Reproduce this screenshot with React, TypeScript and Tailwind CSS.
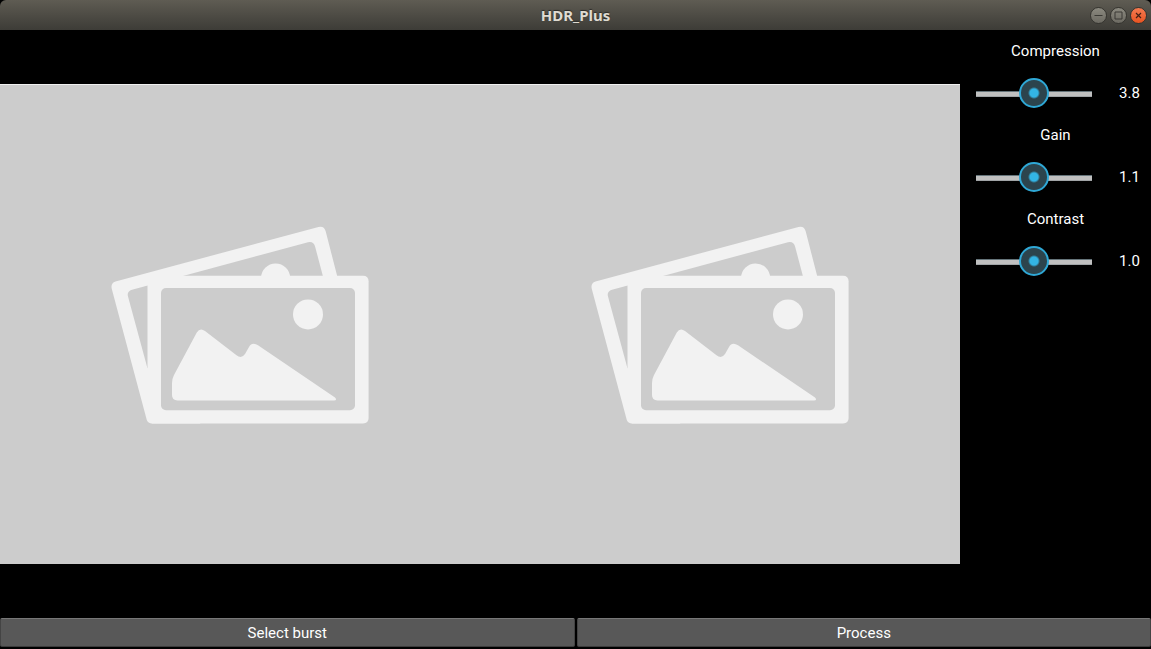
import { useState } from "react";

function Placeholder({ label }: { label: string }) {
  return (
    <svg viewBox="0 0 480 480" role="img" aria-label={label} className="block w-full">
      <rect width="480" height="480" fill="#cccccc" />
      <rect width="480" height="1" fill="#f0f0f0" />
      <g fill="#f2f2f2">
        <path
          fillRule="evenodd"
          d="M115.5 197.5 L318.5 142.9 Q324 141.6 325.6 147 L340 203 L200 339.4 H152 Q148 339.4 146.8 336 L111.8 205 Q110.4 199.2 115.5 197.5 Z M132 205.8 Q126.6 207.6 128 212.5 L147.4 284 L200 300 L330 219 L315.2 163 Q313.8 157 308 158.2 Z"
        />
        <circle cx="275.6" cy="194" r="14.6" />
        <path d="M147.5 191.7 H363 Q368.6 191.7 368.6 197.3 V334 Q368.6 339.4 363 339.4 H152 L147.5 335 Z" />
      </g>
      <rect x="161" y="204" width="194" height="122.3" rx="5" fill="#cccccc" />
      <g fill="#f2f2f2">
        <circle cx="308" cy="230.4" r="15" />
        <path d="M172 299 Q172 295 174 291 L196.8 248.5 Q200 243.3 205 247 L236.5 271.2 Q241.5 275.3 245 270 L249 263 Q252 257.5 258 261.3 L335 313.6 Q337.5 316.4 334 316.4 H177.5 Q172 316.4 172 311 Z" />
      </g>
    </svg>
  );
}

interface SettingProps {
  id: string;
  label: string;
  initial: number;
}

function Setting({ id, label, initial }: SettingProps) {
  const [value, setValue] = useState(initial);
  return (
    <div>
      <label htmlFor={id} className="flex h-[42px] items-center justify-center">
        {label}
      </label>
      <div className="flex h-[42px] items-center">
        <div className="flex flex-1 px-4">
          <input
            id={id}
            type="range"
            min={0}
            max={initial * 2}
            step={0.1}
            value={value}
            onChange={(e) => setValue(Number(e.target.value))}
            className="h-[30px] w-full min-w-0 appearance-none bg-transparent [&::-webkit-slider-runnable-track]:h-[30px] [&::-webkit-slider-runnable-track]:bg-[linear-gradient(transparent_13px,#65747a_13px,#65747a_14px,#c0c0c0_14px,#c0c0c0_18px,#a0a4a6_18px,#a0a4a6_19px,transparent_19px)] [&::-webkit-slider-thumb]:size-[30px] [&::-webkit-slider-thumb]:appearance-none [&::-webkit-slider-thumb]:rounded-full [&::-webkit-slider-thumb]:border-2 [&::-webkit-slider-thumb]:border-[#2fa8d6] [&::-webkit-slider-thumb]:bg-[radial-gradient(circle,#33b5e5_4px,#2c444d_6px)] [&::-webkit-slider-thumb]:bg-origin-border"
          />
        </div>
        <output htmlFor={id} className="w-[43px] text-center">
          {value.toFixed(1)}
        </output>
      </div>
    </div>
  );
}

const windowButton = "flex size-[17px] items-center justify-center rounded-full border border-[#35342f]";
const actionButton =
  "h-[29px] flex-1 rounded-xs border border-t-[#777777] border-x-[#444444] border-b-[#3c3c3c] bg-[#585858] pt-px";

export default function App() {
  return (
    <div className="flex min-h-screen flex-col bg-black font-['Roboto',sans-serif] text-[15px] text-white">
      <header className="grid h-[30px] grid-cols-[1fr_auto_1fr] items-center rounded-t-md bg-linear-to-b from-[#5f5c53] to-[#3d3c37] px-1">
        <h1 className="col-start-2 font-['Noto_Sans',sans-serif] text-[15px] leading-5 font-bold text-[#dfdbd2] [text-shadow:0_-1px_1px_#2b2a27]">
          HDR_Plus
        </h1>
        <div className="flex justify-end gap-[3px]">
          <button aria-label="Minimize" className={`${windowButton} bg-linear-to-b from-[#8b897f] to-[#6c6a62]`}>
            <svg viewBox="0 0 15 15" className="size-[15px]" stroke="#3a3934">
              <path d="M3.5 7.5h8" />
            </svg>
          </button>
          <button aria-label="Maximize" className={`${windowButton} bg-linear-to-b from-[#8b897f] to-[#6c6a62]`}>
            <svg viewBox="0 0 15 15" className="size-[15px]" stroke="#3a3934" fill="none">
              <path d="M4 4h7v7h-7z" />
            </svg>
          </button>
          <button aria-label="Close" className={`${windowButton} bg-linear-to-b from-[#f57a4f] to-[#e9531f]`}>
            <svg viewBox="0 0 15 15" className="size-[15px]" stroke="#452015" strokeWidth="1.2">
              <path d="M5 5l5 5M10 5l-5 5" />
            </svg>
          </button>
        </div>
      </header>

      <main className="flex flex-1">
        <section className="grid flex-1 grid-cols-2 items-center">
          <Placeholder label="Burst preview" />
          <Placeholder label="Processed preview" />
        </section>
        <aside className="w-[191px]">
          <Setting id="compression" label="Compression" initial={3.8} />
          <Setting id="gain" label="Gain" initial={1.1} />
          <Setting id="contrast" label="Contrast" initial={1.0} />
        </aside>
      </main>

      <footer className="flex gap-[2px] pb-[2px]">
        <button className={actionButton}>Select burst</button>
        <button className={actionButton}>Process</button>
      </footer>
    </div>
  );
}
